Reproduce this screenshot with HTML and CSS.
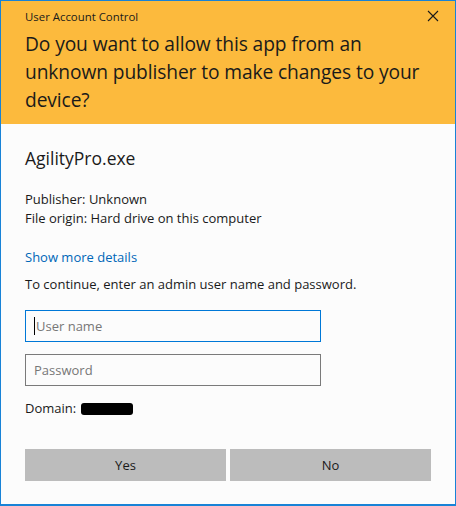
FILE: index.html
```html
<!DOCTYPE html>
<html>
<head>
<meta charset="utf-8">
<link rel="stylesheet" href="styles.css">
</head>
<body>
<div class="window">
  <header class="head">
    <div class="titlebar">
      <span class="title">User Account Control</span>
      <svg class="close" width="12" height="12" viewBox="0 0 12 12"><path d="M1 1L11 11M11 1L1 11" stroke="#1a1a1a" stroke-width="1.1" fill="none"/></svg>
    </div>
    <h1 class="question">Do you want to allow this app from an unknown publisher to make changes to your device?</h1>
  </header>
  <main class="content">
    <div class="app">AgilityPro.exe</div>
    <div class="info">
      <div>Publisher: Unknown</div>
      <div>File origin: Hard drive on this computer</div>
    </div>
    <a class="more">Show more details</a>
    <div class="prompt">To continue, enter an admin user name and password.</div>
    <div class="field focus"><span class="caret"></span><span class="ph">User name</span></div>
    <div class="field"><span class="ph">Password</span></div>
    <div class="domain">Domain: <span class="redact"></span></div>
    <div class="buttons">
      <div class="btn">Yes</div>
      <div class="btn">No</div>
    </div>
  </main>
</div>
</body>
</html>
```
FILE: styles.css
```css
html, body { margin: 0; padding: 0; background: #fdfdfd; }
body { font-family: "Open Sans", "Noto Sans", sans-serif; color: #1a1a1a; }
.window {
  width: 456px; height: 506px; box-sizing: border-box;
  border: 1px solid #1883d7; border-bottom-width: 2px;
  background: #fcfcfc; display: flex; flex-direction: column;
}
.head { background: #fcba3d; height: 123px; box-sizing: border-box; padding: 0 0 0 24px; }
.titlebar { display: flex; align-items: center; justify-content: space-between; height: 31px; padding-right: 16px; }
.title { font-size: 11.4px; }
.close { display: block; margin-top: -2px; }
.question { margin: 0; font-weight: normal; font-size: 19.2px; line-height: 28px; width: 420px; letter-spacing: -0.1px; margin-top: -2px; }
.content { padding: 22px 0 0 24px; font-size: 13px; }
.app { font-size: 17.5px; line-height: 24px; }
.info { margin-top: 20px; line-height: 19px; }
.more { display: block; color: #0067b8; margin-top: 20px; line-height: 19px; }
.prompt { margin-top: 8px; line-height: 19px; }
.field {
  margin-top: 16px; width: 296px; height: 32px; box-sizing: border-box;
  border: 1px solid #7a7a7a; display: flex; align-items: center; padding-left: 8px;
  color: #777; position: relative;
}
.field + .field { margin-top: 12px; }
.field.focus { border-color: #0078d7; }
.caret { width: 1px; height: 18px; background: #000; margin-right: 1px; }
.domain { margin-top: 13px; line-height: 19px; display: flex; align-items: center; }
.redact { display: inline-block; width: 52px; height: 12px; background: #000; border-radius: 3px; margin-left: 5px; }
.buttons { display: flex; gap: 4px; margin-top: 31px; }
.btn { width: 201px; height: 32px; background: #bcbcbc; display: flex; align-items: center; justify-content: center; font-size: 13px; }
```
